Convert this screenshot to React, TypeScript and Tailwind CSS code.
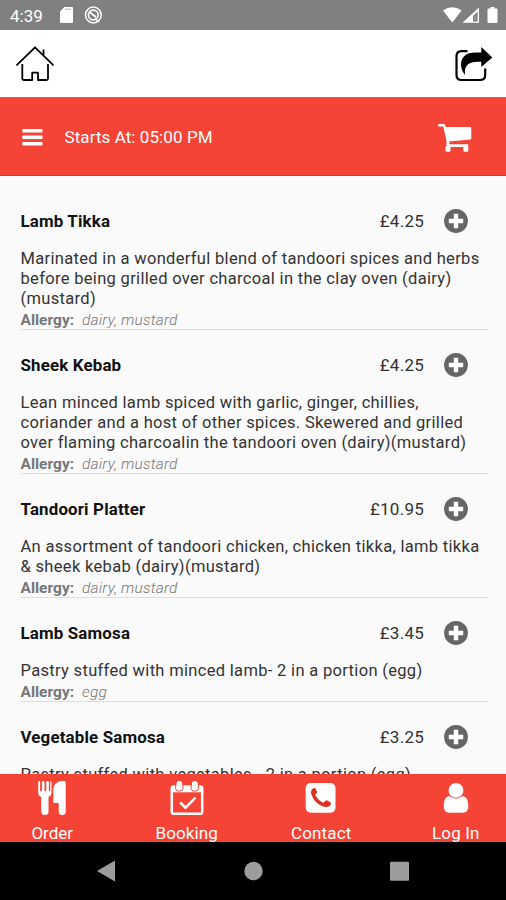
interface MenuItem {
  name: string;
  price: string;
  lines: string[];
  allergy: string;
}

const ITEMS: MenuItem[] = [
  {
    name: "Lamb Tikka",
    price: "£4.25",
    lines: [
      "Marinated in a wonderful blend of tandoori spices and herbs",
      "before being grilled over charcoal in the clay oven (dairy)",
      "(mustard)",
    ],
    allergy: "dairy, mustard",
  },
  {
    name: "Sheek Kebab",
    price: "£4.25",
    lines: [
      "Lean minced lamb spiced with garlic, ginger, chillies,",
      "coriander and a host of other spices. Skewered and grilled",
      "over flaming charcoalin the tandoori oven (dairy)(mustard)",
    ],
    allergy: "dairy, mustard",
  },
  {
    name: "Tandoori Platter",
    price: "£10.95",
    lines: [
      "An assortment of tandoori chicken, chicken tikka, lamb tikka",
      "& sheek kebab (dairy)(mustard)",
    ],
    allergy: "dairy, mustard",
  },
  {
    name: "Lamb Samosa",
    price: "£3.45",
    lines: ["Pastry stuffed with minced lamb- 2 in a portion (egg)"],
    allergy: "egg",
  },
  {
    name: "Vegetable Samosa",
    price: "£3.25",
    lines: ["Pastry stuffed with vegetables - 2 in a portion (egg)"],
    allergy: "egg",
  },
];

function StatusBar() {
  return (
    <div className="flex h-[30px] shrink-0 items-center bg-[#808080] pl-[10px] pr-[7px] text-white">
      <span className="w-[49px] pt-px text-[17px] leading-[30px]">4:39</span>
      <svg width="44" height="18" viewBox="0 0 44 18" fill="currentColor">
        <path d="M5.5 1H13q1 0 1 1v14q0 1-1 1H2q-1 0-1-1V5.5Z" />
        <path d="M6.500 3.300H12" stroke="#808080" strokeOpacity="0.6" strokeWidth="1.600" strokeDasharray="1.300 0.600" />
        <circle cx="34.3" cy="9" r="7.9" fill="none" stroke="currentColor" strokeWidth="1.5" />
        <circle cx="34.3" cy="9" r="4.9" fill="none" stroke="currentColor" strokeWidth="1.6" />
        <path d="M31 6.500 37 11" stroke="currentColor" strokeWidth="2" />
        <path d="M36 12.500l4 3.500" stroke="currentColor" strokeWidth="1.5" />
      </svg>
      <svg className="ml-auto" width="57" height="18" viewBox="0 0 57 18" fill="currentColor">
        <path d="M1 4.5Q10.3-1.8 19.6 4.5L10.3 16.6Z" />
        <path d="M37 1.5V16.8H20.5ZM35.6 5.500 31 10V15.4H35.600Z" fillRule="evenodd" />
        <path d="M32.300 11 33.900 9.500V14H32.300Z" fillOpacity="0.250" />
        <path d="M48.5 1h4v1.6h2q1 0 1 1V16q0 1-1 1h-8q-1 0-1-1V3.600q0-1 1-1h2Z" />
      </svg>
    </div>
  );
}

function TopBar() {
  return (
    <header className="flex h-[67px] shrink-0 items-center justify-between bg-white pl-[14px] pr-3">
      <svg width="42" height="40" viewBox="14 44.500 42 40" fill="none" stroke="#000" strokeWidth="1.8" strokeLinejoin="round">
        <path d="M17 65.3 35 47.8 53 65.300" strokeLinecap="round" />
        <path d="M43.500 55.500V50" />
        <path d="M22.300 64.500V79q0 1.500 1.500 1.500H32.200V73.200H38V80.500H46.500q1.500 0 1.500-1.500V64.500" />
      </svg>
      <svg width="40" height="40" viewBox="454 43.500 40 40">
        <path
          d="M467.500 50.600H461.500q-5 0-5 5V74.500q0 5 5 5H480q5.200 0 5.200-5V68"
          fill="none"
          stroke="#000"
          strokeWidth="2.200"
        />
        <path d="M481.300 46.500 492.300 57 481.300 66.500V61.300C472 60.800 463 62.500 465.300 74.800 458 66 459.500 52 475 52H481.300Z" />
      </svg>
    </header>
  );
}

function OrderBar() {
  return (
    <div className="flex h-[79px] shrink-0 items-center border-y border-t-[#d9564b] border-b-[#e8321f] bg-[#f54336] pl-[22px] pr-[33px] text-white">
      <svg width="21" height="18" viewBox="0 0 21 18" fill="currentColor">
        <rect x="0.300" y="1" width="20.200" height="3.400" rx="0.700" />
        <rect x="0.300" y="7.500" width="20.200" height="3.400" rx="0.700" />
        <rect x="0.300" y="14" width="20.200" height="3.400" rx="0.700" />
      </svg>
      <span className="ml-[21.500px] pt-[2px] text-[17px] tracking-[0.080px]">Starts At: 05:00 PM</span>
      <svg className="ml-auto" width="35" height="30" viewBox="438 122 35 30" fill="currentColor">
        <path d="M438.300 124H444.500L446 127H470.300q1 0 1 1V138.300q0 1-1 1.100L449.300 141.500V144.200H468.300V146.900H446.500V141L443.200 126.600H438.300Z" />
        <rect x="445.500" y="146" width="5" height="5.800" rx="1.600" />
        <rect x="463.300" y="146" width="5" height="5.800" rx="1.600" />
      </svg>
    </div>
  );
}

function MenuRow({ item }: { item: MenuItem }) {
  return (
    <li className="border-b border-[#dedede] pt-[20px]">
      <div className="flex h-[30px] items-center">
        <h2 className="pt-[2px] text-[16.900px] font-bold tracking-[0.160px] text-[#111]">{item.name}</h2>
        <span className="ml-auto pt-[2px] text-[17px] tracking-[0.250px] text-[#333]">{item.price}</span>
        <svg className="ml-5 mr-5" width="24" height="24" viewBox="0 0 24 24">
          <circle cx="12" cy="12" r="11.900" fill="#666" />
          <path d="M12 4.800V19.200M4.800 12H19.200" stroke="#fff" strokeWidth="4.400" />
        </svg>
      </div>
      <p className="mt-[13px] whitespace-nowrap text-[16.500px] leading-[20px] tracking-[0.320px] text-[#333]">
        {item.lines.map((line) => (
          <span key={line} className="block">
            {line}
          </span>
        ))}
      </p>
      <p className="mt-[2px] whitespace-nowrap text-[15.500px] leading-[18px] text-[#777]">
        <span className="mr-2 font-bold">Allergy:</span>
        <em className="font-light tracking-[0.150px]">{item.allergy}</em>
      </p>
    </li>
  );
}

function TabBar() {
  return (
    <nav className="h-[68px] shrink-0 bg-[#f54336] text-[17px] leading-[20px] text-white">
      <div className="-ml-[15px] -mr-[17px] grid grid-cols-4 pt-[6px]">
        <div className="flex flex-col items-center">
          <svg width="30" height="36" viewBox="37 780 30 36" fill="currentColor">
            <path d="M38.200 782q0-1 .9-1t1 1v8.500q0 .8.900.8t.9-.8V782q0-1 1.300-1t1.300 1v8.500q0 .8.900.8t.9-.8V782q0-1 1.300-1t1.300 1v8.500q0 .8.700.8t.7-.8V782q0-1 .6-1t.6 1v10.500q0 3-3 4.500V812q0 3-3.500 3t-3.800-3V797q-3-1.500-3-4.500Z" />
            <path d="M61.500 781H64.500q1.200 0 1.200 1.200V812q0 3-3.400 3t-3.600-3V803H54.300q-1 0-1-1V789.500Q53.500 782 61.500 781Z" />
          </svg>
          <span className="mt-[7px]">Order</span>
        </div>
        <div className="flex flex-col items-center">
          <svg width="34" height="36" viewBox="171 780 34 36" fill="none" stroke="currentColor">
            <rect x="172.800" y="786.500" width="30.400" height="27.200" rx="1.800" strokeWidth="2.500" />
            <path d="M172.500 786h31v6.300h-31Z" fill="currentColor" stroke="none" />
            <path d="M176.700 784v4.500q0 2.700 3.600 2.700t3.600-2.700V784M192.200 784v4.500q0 2.700 3.600 2.700t3.600-2.700V784" stroke="#f54336" strokeWidth="1" />
            <rect x="177.500" y="781" width="5.600" height="9.200" rx="2.400" fill="currentColor" stroke="none" />
            <rect x="193" y="781" width="5.600" height="9.200" rx="2.400" fill="currentColor" stroke="none" />
            <path d="M181.200 802.500l5.300 5.200 10-10" strokeWidth="2.500" />
          </svg>
          <span className="mt-[7px] tracking-[0.100px]">Booking</span>
        </div>
        <div className="flex flex-col items-center">
          <svg width="32" height="36" viewBox="305.500 780 32 36" fill="currentColor">
            <rect x="306.200" y="783" width="29.800" height="29.700" rx="5" />
            <path
              d="M312.200 789.500q1.700-2 3.400-1.500l2 4q.3 1-1.500 2.300-.6.600 0 1.500 2.500 4.400 7 6.600 1 .4 1.500-.2l1.600-1.800q.6-.4 1.400 0l3.700 2q.8 1-1 3.300-3 2.500-7.500.6-8.500-3.600-11-12.300-.500-2.600.400-4.500Z"
              fill="#e0301f"
            />
          </svg>
          <span className="mt-[7px] tracking-[0.150px]">Contact</span>
        </div>
        <div className="flex flex-col items-center">
          <svg width="26" height="36" viewBox="442.700 780 26 36" fill="currentColor">
            <path d="M449 796q6.700 4.800 13.400 0 5.600.8 5.600 10 0 6.800-5.500 6.800H449q-5.600 0-5.600-6.800 0-9.200 5.600-10Z" />
            <circle cx="455.700" cy="790.400" r="7.700" stroke="#f54336" strokeWidth="0.600" />
          </svg>
          <span className="mt-[7px] tracking-[0.150px]">Log In</span>
        </div>
      </div>
    </nav>
  );
}

function SystemNav() {
  return (
    <div className="flex h-[58px] shrink-0 items-center bg-black pl-[97px] pr-[97px]">
      <svg width="312" height="22" viewBox="97 860 312 22" fill="#9c9c9c">
        <path d="M97 871 115 860.500V881.500Z" />
        <circle cx="253.500" cy="871" r="9.200" />
        <rect x="390" y="861.700" width="19" height="19" rx="1" />
      </svg>
    </div>
  );
}

export default function App() {
  return (
    <div className="flex h-[900px] w-[506px] flex-col overflow-hidden bg-[#fafafa] font-[Roboto,sans-serif]">
      <StatusBar />
      <TopBar />
      <OrderBar />
      <main className="min-h-0 flex-1 overflow-hidden pl-[20.500px] pr-[18px] pt-[10px]">
        <ul>
          {ITEMS.map((item) => (
            <MenuRow key={item.name} item={item} />
          ))}
        </ul>
      </main>
      <TabBar />
      <SystemNav />
    </div>
  );
}
